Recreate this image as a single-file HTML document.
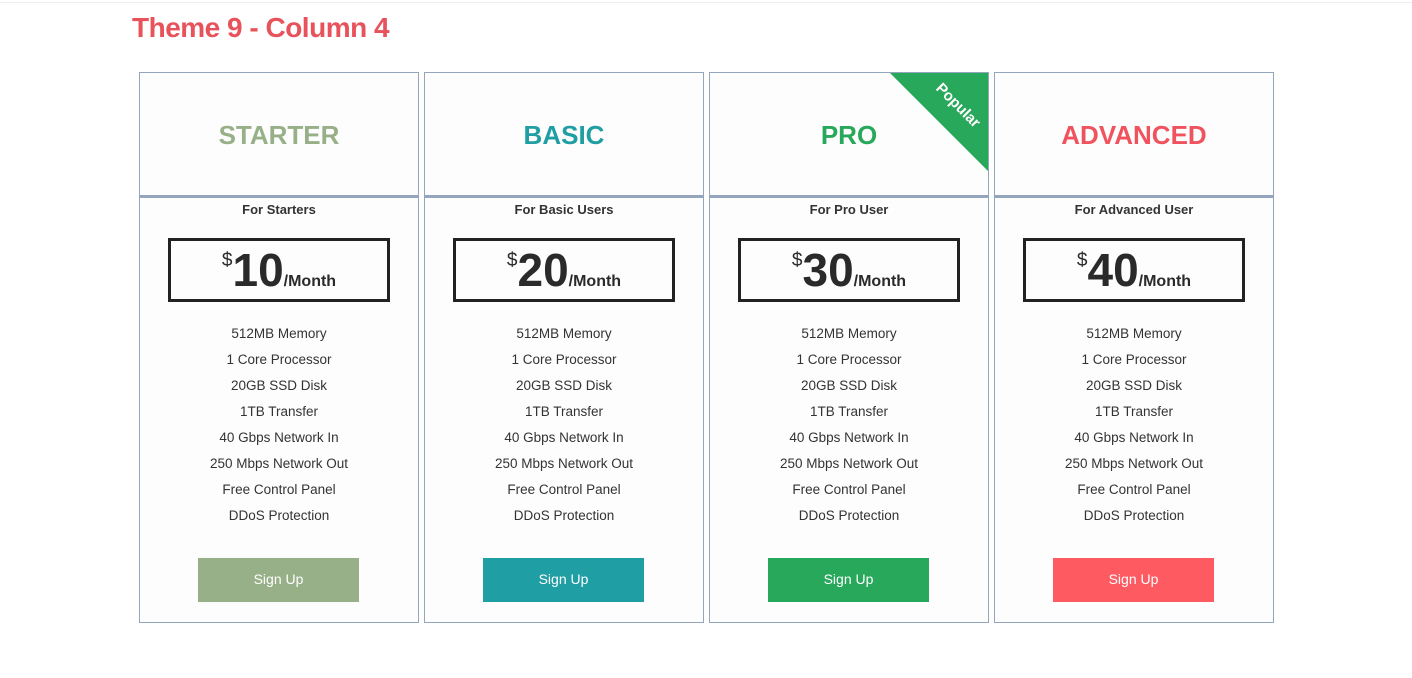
<!DOCTYPE html>
<html><head><style>
body{margin:0;width:1412px;height:678px;background:#fff;font-family:"Liberation Sans",sans-serif;position:relative;overflow:hidden}
.top{position:absolute;left:0;top:2px;width:1412px;height:1px;background:#eee}
h1{position:absolute;left:132px;top:12px;margin:0;font-size:28px;font-weight:bold;color:#e8535b;letter-spacing:-0.5px}
.card{position:absolute;top:72px;width:278px;height:549px;border:1px solid #94a6bd;background:#fdfdfd;overflow:hidden}
.head{height:122px;border-bottom:3px solid #94a6bd;text-align:center;line-height:124px;font-size:26px;font-weight:bold}
.sub{text-align:center;font-size:13px;font-weight:bold;color:#333;margin-top:4px}
.price{margin:21px auto 0;width:216px;height:58px;border:3px solid #222;text-align:center;color:#2a2a2a}
.price .d{font-size:19px;vertical-align:top;position:relative;top:9px}
.price .n{font-size:46px;font-weight:bold;line-height:58px}
.price .m{font-size:16px;font-weight:bold}
ul{list-style:none;margin:19px 0 0;padding:0;text-align:center;font-size:13.5px;color:#333}
li{height:26px;line-height:26px}
.btn{position:absolute;left:58px;top:485px;width:161px;height:44px;line-height:43px;text-align:center;color:#fff;font-size:14px}
.rib{position:absolute;right:0;top:0;width:0;height:0;border-top:98px solid #27a85a;border-left:98px solid transparent}
.rib span{position:absolute;top:-74px;right:-10px;transform:rotate(45deg);color:#fff;font-weight:bold;font-size:15px;width:80px;text-align:center}
</style></head><body>
<div class="top"></div>
<h1>Theme 9 - Column 4</h1>

<div class="card" style="left:139px">
<div class="head" style="color:#97b088">STARTER</div>
<div class="sub">For Starters</div>
<div class="price"><span class="d">$</span><span class="n">10</span><span class="m">/Month</span></div>
<ul><li>512MB Memory</li><li>1 Core Processor</li><li>20GB SSD Disk</li><li>1TB Transfer</li><li>40 Gbps Network In</li><li>250 Mbps Network Out</li><li>Free Control Panel</li><li>DDoS Protection</li></ul>
<div class="btn" style="background:#97b088">Sign Up</div>
</div>

<div class="card" style="left:424px">
<div class="head" style="color:#1f9ea3">BASIC</div>
<div class="sub">For Basic Users</div>
<div class="price"><span class="d">$</span><span class="n">20</span><span class="m">/Month</span></div>
<ul><li>512MB Memory</li><li>1 Core Processor</li><li>20GB SSD Disk</li><li>1TB Transfer</li><li>40 Gbps Network In</li><li>250 Mbps Network Out</li><li>Free Control Panel</li><li>DDoS Protection</li></ul>
<div class="btn" style="background:#1f9ea3">Sign Up</div>
</div>

<div class="card" style="left:709px">
<div class="rib"><span>Popular</span></div>
<div class="head" style="color:#27a85a">PRO</div>
<div class="sub">For Pro User</div>
<div class="price"><span class="d">$</span><span class="n">30</span><span class="m">/Month</span></div>
<ul><li>512MB Memory</li><li>1 Core Processor</li><li>20GB SSD Disk</li><li>1TB Transfer</li><li>40 Gbps Network In</li><li>250 Mbps Network Out</li><li>Free Control Panel</li><li>DDoS Protection</li></ul>
<div class="btn" style="background:#27a85a">Sign Up</div>
</div>

<div class="card" style="left:994px">
<div class="head" style="color:#f0535e">ADVANCED</div>
<div class="sub">For Advanced User</div>
<div class="price"><span class="d">$</span><span class="n">40</span><span class="m">/Month</span></div>
<ul><li>512MB Memory</li><li>1 Core Processor</li><li>20GB SSD Disk</li><li>1TB Transfer</li><li>40 Gbps Network In</li><li>250 Mbps Network Out</li><li>Free Control Panel</li><li>DDoS Protection</li></ul>
<div class="btn" style="background:#fd5a62">Sign Up</div>
</div>
</body></html>
